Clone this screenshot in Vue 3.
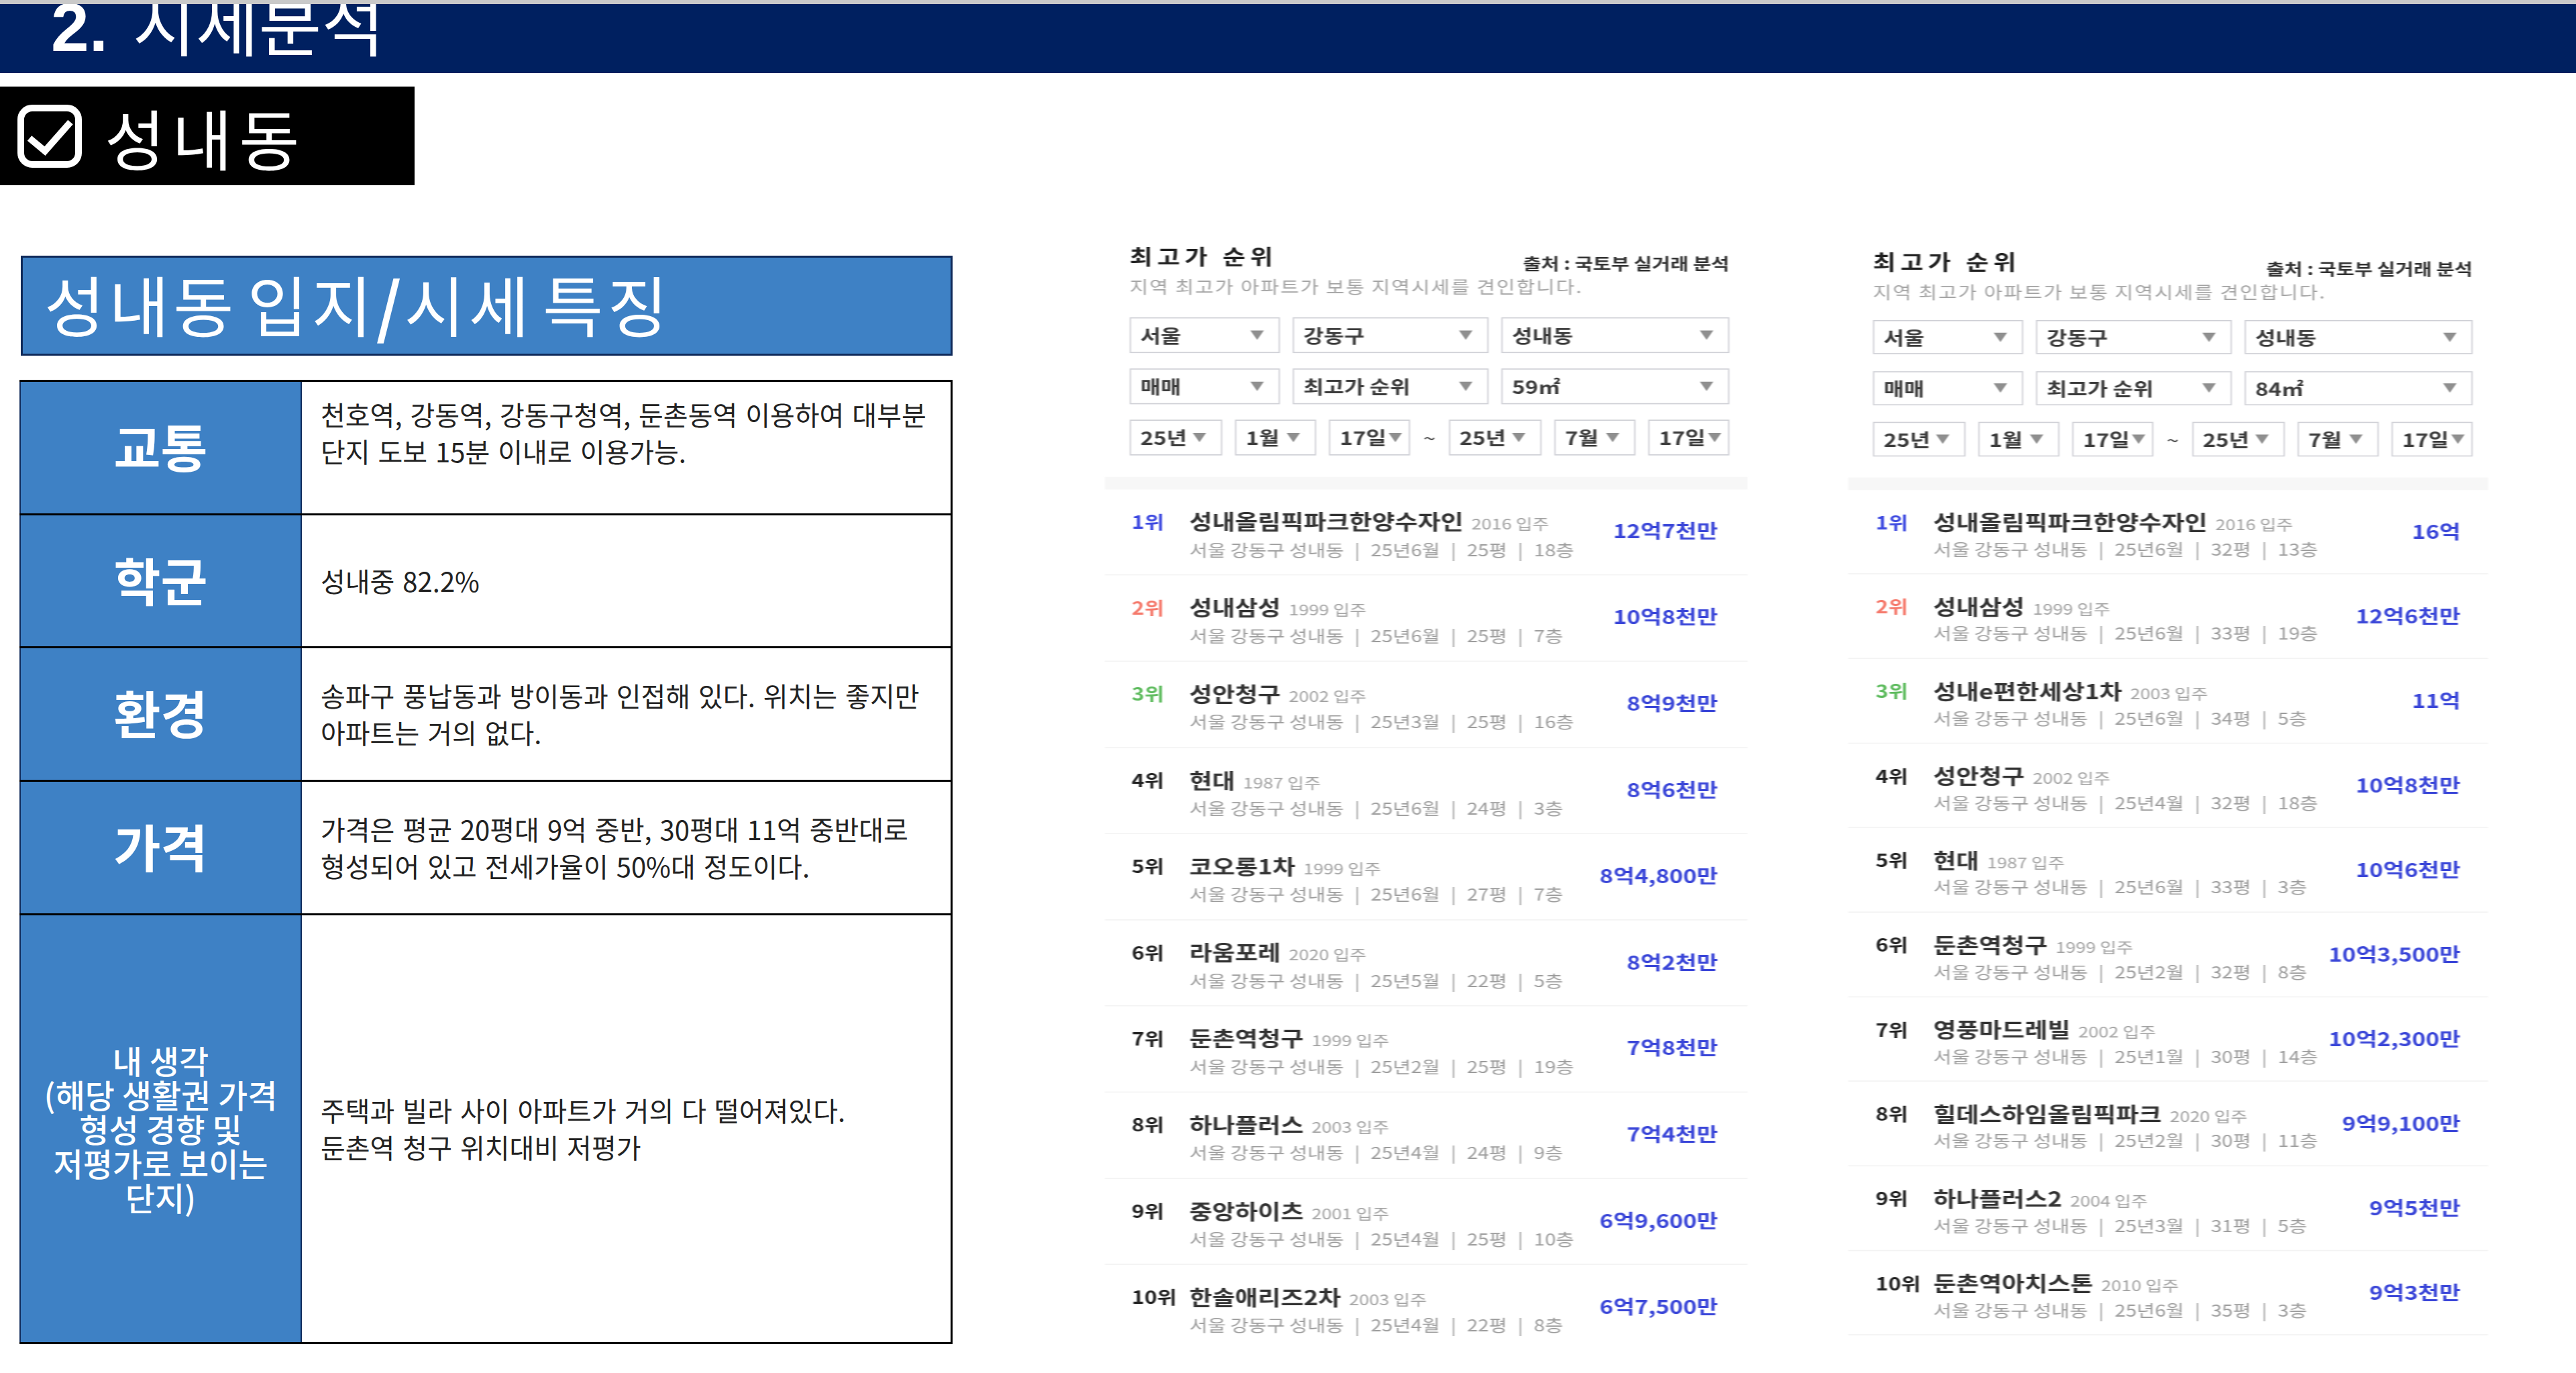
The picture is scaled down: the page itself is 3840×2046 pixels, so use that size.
<template>
  <div class="page">
    <header class="top-bar">
      <h1 class="top-title"><b>2.</b> 시세분석</h1>
    </header>

    <div class="area-tag">
      <svg class="check-icon" viewBox="0 0 96 94" fill="none" stroke="#fff">
        <rect x="5" y="5" width="86" height="84" rx="17" stroke-width="10" />
        <path d="M18 50 L41 69 L79 26" stroke-width="10" />
      </svg>
      <span>성내동</span>
    </div>

    <main class="content">
      <section class="summary">
        <h2 class="summary-title">성내동 입지<b>/</b>시세 특징</h2>
        <div class="summary-table">
          <div v-for="row in summary" :key="row.label" class="summary-row" :class="row.kind">
            <div class="summary-label" v-html="row.label"></div>
            <div class="summary-text" v-html="row.text"></div>
          </div>
        </div>
      </section>

      <section v-for="panel in panels" :key="panel.area" class="panel" :class="panel.kind">
        <div class="panel-head">
          <h3 class="panel-title">최고가 순위</h3>
          <span class="panel-source">출처 : 국토부 실거래 분석</span>
        </div>
        <p class="panel-desc">지역 최고가 아파트가 보통 지역시세를 견인합니다.</p>

        <div class="filters">
          <div class="filter-row">
            <div class="select"><span>서울</span><i class="arrow"></i></div>
            <div class="select"><span>강동구</span><i class="arrow"></i></div>
            <div class="select"><span>성내동</span><i class="arrow"></i></div>
          </div>
          <div class="filter-row">
            <div class="select"><span>매매</span><i class="arrow"></i></div>
            <div class="select"><span>최고가 순위</span><i class="arrow"></i></div>
            <div class="select"><span>{{ panel.area }}</span><i class="arrow"></i></div>
          </div>
          <div class="date-row">
            <div class="select year"><span>25년</span><i class="arrow"></i></div>
            <div class="select part"><span>1월</span><i class="arrow"></i></div>
            <div class="select part"><span>17일</span><i class="arrow tight"></i></div>
            <span class="tilde">~</span>
            <div class="select year"><span>25년</span><i class="arrow"></i></div>
            <div class="select part"><span>7월</span><i class="arrow"></i></div>
            <div class="select part"><span>17일</span><i class="arrow tight"></i></div>
          </div>
        </div>

        <div class="gray-bar"></div>

        <ul class="rank-list">
          <li v-for="(item, index) in panel.items" :key="item[0]" class="rank-item">
            <span class="rank" :class="'rank-' + (index + 1)">{{ index + 1 }}위</span>
            <div class="apt">
              <div class="apt-name">{{ item[0] }}<small>{{ item[1] }} 입주</small></div>
              <div class="apt-info">
                서울 강동구 성내동<i>|</i>{{ item[2] }}<i>|</i>{{ item[3] }}<i>|</i>{{ item[4] }}
              </div>
            </div>
            <span class="price">{{ item[5] }}</span>
          </li>
        </ul>
      </section>
    </main>
  </div>
</template>

<script setup>
const summary = [
  { label: '교통', kind: 'top-text', text: '천호역, 강동역, 강동구청역, 둔촌동역 이용하여 대부분<br>단지 도보 15분 이내로 이용가능.' },
  { label: '학군', text: '성내중 82.2%' },
  { label: '환경', text: '송파구 풍납동과 방이동과 인접해 있다. 위치는 좋지만<br>아파트는 거의 없다.' },
  { label: '가격', text: '가격은 평균 20평대 9억 중반, 30평대 11억 중반대로<br>형성되어 있고 전세가율이 50%대 정도이다.' },
  {
    label: '내 생각<br>(해당 생활권 가격<br>형성 경향 및<br>저평가로 보이는<br>단지)',
    kind: 'opinion',
    text: '주택과 빌라 사이 아파트가 거의 다 떨어져있다.<br>둔촌역 청구 위치대비 저평가'
  }
]

const panels = [
  {
    area: '59㎡',
    kind: 'panel-a',
    items: [
      ['성내올림픽파크한양수자인', '2016', '25년6월', '25평', '18층', '12억7천만'],
      ['성내삼성', '1999', '25년6월', '25평', '7층', '10억8천만'],
      ['성안청구', '2002', '25년3월', '25평', '16층', '8억9천만'],
      ['현대', '1987', '25년6월', '24평', '3층', '8억6천만'],
      ['코오롱1차', '1999', '25년6월', '27평', '7층', '8억4,800만'],
      ['라움포레', '2020', '25년5월', '22평', '5층', '8억2천만'],
      ['둔촌역청구', '1999', '25년2월', '25평', '19층', '7억8천만'],
      ['하나플러스', '2003', '25년4월', '24평', '9층', '7억4천만'],
      ['중앙하이츠', '2001', '25년4월', '25평', '10층', '6억9,600만'],
      ['한솔애리즈2차', '2003', '25년4월', '22평', '8층', '6억7,500만']
    ]
  },
  {
    area: '84㎡',
    kind: 'panel-b',
    items: [
      ['성내올림픽파크한양수자인', '2016', '25년6월', '32평', '13층', '16억'],
      ['성내삼성', '1999', '25년6월', '33평', '19층', '12억6천만'],
      ['성내e편한세상1차', '2003', '25년6월', '34평', '5층', '11억'],
      ['성안청구', '2002', '25년4월', '32평', '18층', '10억8천만'],
      ['현대', '1987', '25년6월', '33평', '3층', '10억6천만'],
      ['둔촌역청구', '1999', '25년2월', '32평', '8층', '10억3,500만'],
      ['영풍마드레빌', '2002', '25년1월', '30평', '14층', '10억2,300만'],
      ['힐데스하임올림픽파크', '2020', '25년2월', '30평', '11층', '9억9,100만'],
      ['하나플러스2', '2004', '25년3월', '31평', '5층', '9억5천만'],
      ['둔촌역아치스톤', '2010', '25년6월', '35평', '3층', '9억3천만']
    ]
  }
]
</script>

<style>
html,
body {
  margin: 0;
  background: #fff;
}
</style>

<style scoped>
.page {
  width: 3840px;
  height: 2046px;
  overflow: hidden;
  background: #fff;
  font-family: "Noto Sans CJK KR", "Liberation Sans", sans-serif;
  color: #222;
}

.top-bar {
  height: 103px;
  border-top: 6px solid #c9c9c9;
  background: #002060;
  overflow: hidden;
  display: flex;
  align-items: flex-end;
  padding-left: 76px;
}

.top-title {
  margin: 0 0 18px;
  font-size: 102px;
  line-height: 100px;
  font-weight: 400;
  color: #fff;
  white-space: nowrap;
}

.top-title b {
  font-family: "Liberation Sans", sans-serif;
  font-weight: 700;
  margin-right: 14px;
}

.area-tag {
  width: 618px;
  height: 147px;
  margin-top: 20px;
  background: #000;
  display: flex;
  align-items: center;
  padding-left: 26px;
  box-sizing: border-box;
  color: #fff;
  font-size: 98px;
  letter-spacing: 10px;
}

.check-icon {
  width: 96px;
  height: 94px;
  margin-right: 34px;
}

.content {
  display: flex;
  margin-top: 64px;
  padding-left: 29px;
  align-items: flex-start;
}

.summary {
  width: 1391px;
  margin-top: 41px;
  flex-shrink: 0;
}

.summary-title {
  height: 149px;
  box-sizing: border-box;
  margin: 0 0 36px 2px;
  border: 3px solid #0f2a5a;
  background: #3e81c5;
  color: #fff;
  font-size: 98px;
  line-height: 135px;
  font-weight: 400;
  letter-spacing: 6px;
  word-spacing: -14px;
  padding-left: 32px;
  white-space: nowrap;
}

.summary-title b {
  letter-spacing: 4px;
}

.summary-table {
  border-top: 3px solid #000;
  border-right: 3px solid #000;
}

.summary-row {
  display: flex;
  height: 195.7px;
  border-bottom: 3px solid #000;
  box-sizing: content-box;
}

.summary-row.opinion {
  height: 636px;
}

.summary-label {
  width: 417px;
  flex-shrink: 0;
  box-sizing: content-box;
  padding-bottom: 0;
  background: #3e81c5;
  border-left: 2px solid #0f2a5a;
  border-right: 2px solid #0f2a5a;
  color: #fff;
  font-size: 76px;
  line-height: 190px;
  font-weight: 700;
  display: flex;
  align-items: flex-start;
  justify-content: center;
  text-align: center;
}

.opinion .summary-label {
  align-items: center;
  font-size: 48px;
  font-weight: 500;
  line-height: 51px;
}

.summary-text {
  flex: 1;
  display: flex;
  align-items: center;
  padding-left: 28px;
  font-size: 40px;
  line-height: 55px;
  word-spacing: 3px;
  color: #222;
}

.top-text .summary-text {
  padding-bottom: 44px;
}

/* 오른쪽 표는 원본 캡처가 가로로 늘어나 있어서 세로만 줄임 */
.panel {
  transform: scaleY(0.82);
  transform-origin: top left;
  filter: blur(0.9px);
  flex-shrink: 0;
  color: #333;
}

.panel-a {
  width: 958px;
  margin-left: 227px;
  --sel-h: 64.6px;
  --sel-gap: 28.5px;
  --row-h: 156.6px;
  --sub-gap: 8px;
  --head-top: 20px;
  --desc-top: -35px;
  --filter-top: 29px;
  --bar-top: 39px;
}

.panel-b {
  width: 954px;
  margin-left: 150px;
  --sel-h: 62.2px;
  --sel-gap: 30.5px;
  --row-h: 153.7px;
  --sub-gap: 6px;
  --head-top: 30px;
  --desc-top: -35px;
  --filter-top: 24px;
  --bar-top: 38px;
}

.panel-head {
  display: flex;
  justify-content: space-between;
  align-items: flex-start;
  width: 894px;
  height: 92px;
  margin: var(--head-top) 0 0 37px;
}

.panel-title {
  margin: 0;
  font-size: 37px;
  line-height: 60px;
  letter-spacing: 7px;
  font-weight: 700;
  color: #222;
}

.panel-source {
  margin-top: 12px;
  font-size: 29.5px;
  line-height: 60px;
  font-weight: 700;
  color: #333;
}

.panel-desc {
  margin: var(--desc-top) 0 0 37px;
  font-size: 30px;
  line-height: 56px;
  letter-spacing: 2px;
  color: #a2a2a2;
}

.filters {
  width: 894px;
  margin: var(--filter-top) 0 0 37px;
  display: flex;
  flex-direction: column;
  gap: var(--sel-gap);
}

.filter-row {
  display: grid;
  grid-template-columns: 224px 292px 1fr;
  gap: 19px;
}

.date-row {
  display: flex;
  gap: 19px;
  align-items: center;
}

.select {
  height: var(--sel-h);
  box-sizing: border-box;
  border: 2px solid #cfd0d6;
  display: flex;
  align-items: center;
  justify-content: space-between;
  padding: 0 22px 0 14px;
  font-size: 33px;
  font-weight: 700;
  color: #3c3c3c;
  white-space: nowrap;
}

.select.year {
  width: 142px;
}

.select.part {
  width: 124px;
}

.arrow {
  width: 0;
  height: 0;
  border-left: 10px solid transparent;
  border-right: 10px solid transparent;
  border-top: 17px solid #8f8f8f;
  flex-shrink: 0;
}

.arrow.tight {
  margin-right: -12px;
}

.tilde {
  width: 20px;
  font-size: 32px;
  text-align: center;
}

.gray-bar {
  height: 23px;
  margin-top: var(--bar-top);
  background: #f7f7f7;
}

.rank-list {
  margin: 0;
  padding: 0;
  list-style: none;
}

.rank-item {
  display: flex;
  height: var(--row-h);
  box-sizing: border-box;
  padding: 37px 44px 0 40px;
  border-bottom: 2px solid #f3f3f3;
}

.rank-item:last-child {
  border-bottom-color: transparent;
}

.panel-b .rank-item {
  padding: 37px 41px 0 41px;
}

.panel-b .rank-item:last-child {
  border-bottom-color: #f3f3f3;
}

.rank {
  width: 86px;
  flex-shrink: 0;
  font-size: 32px;
  line-height: 40px;
  font-weight: 700;
  color: #222;
  white-space: nowrap;
}

.rank-1 {
  color: #3c48e0;
}

.rank-2 {
  color: #f5796b;
}

.rank-3 {
  color: #5dbb5d;
}

.apt {
  flex: 1;
  min-width: 0;
}

.apt-name {
  font-size: 37px;
  line-height: 40px;
  font-weight: 700;
  color: #333;
  white-space: nowrap;
}

.apt-name small {
  margin-left: 12px;
  font-size: 27px;
  font-weight: 400;
  color: #a2a2a2;
}

.apt-info {
  margin-top: var(--sub-gap);
  font-size: 29.5px;
  line-height: 36px;
  color: #9c9c9c;
  white-space: nowrap;
}

.apt-info i {
  font-style: normal;
  margin: 0 16px;
}

.price {
  margin-top: 17px;
  font-size: 34.5px;
  line-height: 40px;
  font-weight: 700;
  color: #3a46d8;
  white-space: nowrap;
}
</style>
